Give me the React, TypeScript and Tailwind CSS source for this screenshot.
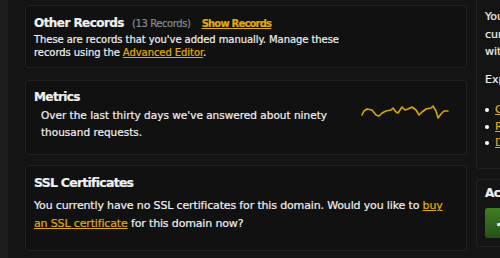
import React from "react";

const spark = [
  [363, 114], [365, 110], [368, 108], [373, 109], [377, 114], [380, 115], [383, 112], [387, 110],
  [392, 109], [394, 107], [397, 111], [399, 112], [403, 106], [406, 109], [409, 108], [413, 106],
  [417, 109], [420, 114], [423, 111], [427, 108], [432, 107], [434, 105], [437, 110], [439, 117],
  [442, 113], [445, 110], [449, 110],
];

function Sparkline() {
  const ox = 360;
  const oy = 100;
  const d = spark.map(([x, y], i) => `${i ? "L" : "M"}${x - ox} ${y - oy}`).join(" ");
  return (
    <svg width="92" height="22" viewBox="0 0 92 22" className="block">
      <path d={d} fill="none" stroke="#d8a800" strokeWidth="1.6" strokeLinejoin="round" strokeLinecap="round" />
    </svg>
  );
}

export default function App() {
  const font = { fontFamily: '"DejaVu Sans", "Liberation Sans", sans-serif' };
  return (
    <div className="w-[500px] h-[258px] bg-[#141414] flex overflow-hidden text-[#f0f0f0] [-webkit-text-stroke:0.2px]" style={font}>
      <div className="w-[8px] shrink-0 bg-[#1d1d1f]" />
      <div className="w-[468px] shrink-0 flex flex-col pl-[17px] pr-[9px] pt-[5px]">
        {/* Other Records */}
        <div className="h-[63px] shrink-0 rounded-[3px] border border-[#212121] bg-[#111111] px-[8px] pt-[9px]">
          <div className="flex items-baseline h-[16px] leading-[16px] whitespace-nowrap">
            <span className="text-[12px] font-bold tracking-[-0.55px]">Other Records</span>
            <span className="ml-[8px] text-[10px] text-[#8a8a8a] tracking-[-0.4px]">(13 Records)</span>
            <a className="ml-[11px] text-[10px] font-bold text-[#e0ae00] underline tracking-[-0.8px]">Show Records</a>
          </div>
          <p className="text-[10px] leading-[12.5px] tracking-[-0.07px] mt-[3px] whitespace-nowrap">
            These are records that you've added manually. Manage these
            <br />
            records using the <a className="text-[#e0ae00] underline">Advanced Editor</a>.
          </p>
        </div>
        {/* Metrics */}
        <div className="mt-[12px] h-[75px] shrink-0 rounded-[3px] border border-[#212121] bg-[#111111] px-[8px] pt-[8px] flex">
          <div className="flex-1">
            <div className="text-[12px] font-bold tracking-[-0.6px] leading-[16px]">Metrics</div>
            <p className="pl-[7px] text-[10.5px] leading-[16.7px] mt-[2px] whitespace-nowrap">
              Over the last thirty days we've answered about ninety
              <br />
              thousand requests.
            </p>
          </div>
          <div className="pt-[12px] pr-[7px]">
            <Sparkline />
          </div>
        </div>
        {/* SSL */}
        <div className="mt-[10px] h-[86px] shrink-0 rounded-[3px] border border-[#212121] bg-[#111111] px-[8px] pt-[9px]">
          <div className="text-[12.5px] font-bold tracking-[-0.75px] leading-[16px]">SSL Certificates</div>
          <p className="text-[11px] leading-[17.5px] tracking-[-0.15px] mt-[6px] whitespace-nowrap">
            You currently have no SSL certificates for this domain. Would you like to{" "}
            <a className="text-[#e0ae00] underline">buy</a>
            <br />
            <a className="text-[#e0ae00] underline">an SSL certificate</a> for this domain now?
          </p>
        </div>
      </div>
      {/* Right column */}
      <div className="flex-1 flex flex-col">
        <div className="h-[169px] shrink-0 border-l border-b border-[#222222] rounded-bl-[4px] pl-[8px] pt-[8px] text-[11px]">
          <div className="leading-[17.5px] whitespace-nowrap">You</div>
          <div className="leading-[17.5px] whitespace-nowrap">cur</div>
          <div className="leading-[17.5px] whitespace-nowrap">wit</div>
          <div className="leading-[17.5px] whitespace-nowrap mt-[10px]">Exp</div>
          <ul className="mt-[14px]">
            {["C", "R", "D"].map((l) => (
              <li key={l} className="flex items-center h-[16.5px] whitespace-nowrap">
                <span className="w-[4px] h-[4px] rounded-full bg-white mr-[6px]" />
                <a className="text-[#e0ae00] underline">{l}ur</a>
              </li>
            ))}
          </ul>
        </div>
        <div className="mt-[10px] h-[68px] shrink-0 border-l border-t border-b border-[#222222] rounded-l-[4px] pl-[8px] pt-[5px]">
          <div className="text-[12px] font-bold tracking-[-0.5px] leading-[16px] whitespace-nowrap">Act</div>
          <div className="mt-[7px] h-[30px] rounded-l-[3px] bg-gradient-to-b from-[#3f7f22] to-[#25521a] flex items-center pl-[11px] text-white text-[10px]">
            ✔
          </div>
        </div>
      </div>
    </div>
  );
}
